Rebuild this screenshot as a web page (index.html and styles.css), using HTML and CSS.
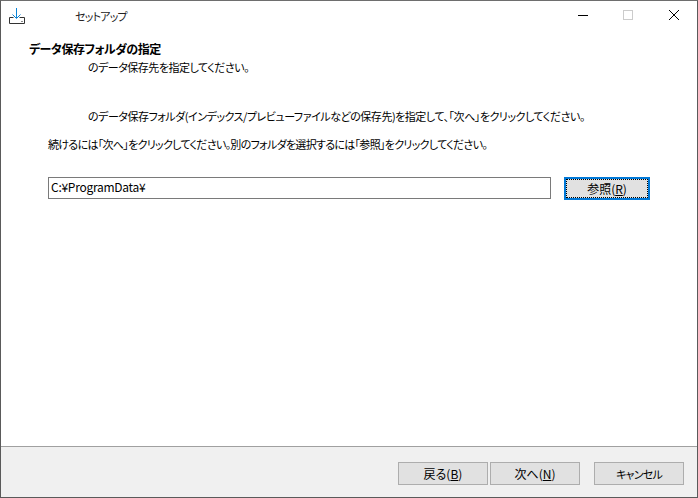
FILE: index.html
```html
<!DOCTYPE html>
<html lang="ja">
<head>
<meta charset="utf-8">
<title>セットアップ</title>
<link rel="stylesheet" href="styles.css">
</head>
<body>
<div class="window">
  <header class="titlebar">
    <svg class="app-icon" width="16" height="16" viewBox="0 0 16 16" fill="none">
      <path d="M7.5 0V10" stroke="#0a84d8"/>
      <path d="M3.5 6.5L7.5 10.5L11.5 6.5" stroke="#0a84d8"/>
      <path d="M4.5 9.5H.5V15.5H15.5V9.5H10.5" stroke="#333"/>
      <path d="M12 13.5H14" stroke="#888"/>
    </svg>
    <span class="title">セットアップ</span>
    <div class="controls">
      <svg class="ctl" width="10" height="10" viewBox="0 0 10 10"><path d="M0 5.5H10" stroke="#000"/></svg>
      <svg class="ctl" width="10" height="10" viewBox="0 0 10 10"><rect x=".5" y=".5" width="9" height="9" fill="none" stroke="#ccc"/></svg>
      <svg class="ctl" width="10" height="10" viewBox="0 0 10 10"><path d="M0 0L10 10M10 0L0 10" stroke="#000"/></svg>
    </div>
  </header>
  <main class="content">
    <h1 class="heading">データ保存フォルダの指定</h1>
    <p class="sub">のデータ保存先を指定してください。</p>
    <p class="desc">のデータ保存フォルダ(インデックス/プレビューファイルなどの保存先)を指定して、「次へ」をクリックしてください。</p>
    <p class="note">続けるには「次へ」をクリックしてください。別のフォルダを選択するには「参照」をクリックしてください。</p>
    <div class="path-row">
      <div class="path-input">C:¥ProgramData¥</div>
      <button class="btn browse"><span class="focus">参照(<u>R</u>)</span></button>
    </div>
  </main>
  <footer class="footer">
    <button class="btn nav">戻る(<u>B</u>)</button>
    <button class="btn nav">次へ(<u>N</u>)</button>
    <button class="btn nav cancel">キャンセル</button>
  </footer>
</div>
</body>
</html>
```
FILE: styles.css
```css
* { box-sizing: border-box; }
html, body { margin: 0; padding: 0; }
body {
  width: 698px;
  height: 498px;
  overflow: hidden;
  background: #fff;
  font-family: "Noto Sans CJK JP", "Noto Sans", sans-serif;
  font-size: 12px;
  color: #000;
  font-feature-settings: "palt";
}
.window {
  width: 698px;
  height: 498px;
  display: flex;
  flex-direction: column;
  border: 1px solid #5a5a5a;
  border-top-color: #6e6e6e;
}
.titlebar {
  height: 30px;
  display: flex;
  align-items: center;
  flex: none;
}
.app-icon { margin-left: 8px; margin-top: -1px; }
.title { margin-left: 50px; color: #222; font-size: 11px; letter-spacing: -.8px; }
.controls { margin-left: auto; margin-top: -2px; display: flex; align-items: center; margin-right: 18px; gap: 35px; }
.ctl { display: block; }
.ctl:last-child { margin-left: 1px; }
.content { flex: 1; min-height: 0; display: flex; flex-direction: column; padding-left: 28px; }
.heading { margin: 9px 0 0; font-size: 12px; line-height: 18px; font-weight: 700; letter-spacing: -.5px; }
.sub, .desc, .note { margin: 0; line-height: 18px; white-space: nowrap; font-size: 11px; }
.sub { margin: 0 0 0 59px; letter-spacing: -.5px; }
.desc { margin: 31px 0 0 59px; letter-spacing: -.47px; }
.note { margin: 10px 0 0 19px; letter-spacing: -.7px; }
.path-row { display: flex; align-items: flex-start; margin: 24px 0 0 19px; }
.path-input {
  width: 503px;
  height: 22px;
  border: 1px solid #7a7a7a;
  padding-left: 2px;
  line-height: 18px;
  font-size: 12px;
  letter-spacing: -.27px;
}
.btn {
  font-family: inherit;
  font-feature-settings: inherit;
  font-size: 12px;
  color: #000;
  background: #e1e1e1;
  border: 1px solid #adadad;
  padding: 0;
  width: 90px;
  height: 23px;
}
.browse { width: 86px; height: 23px; margin-left: 13px; border: 2px solid #0078d7; padding: 0; display: flex; }
.focus { flex: 1; border: 1px dotted #000; display: flex; align-items: center; justify-content: center; }
.footer {
  flex: none;
  height: 51px;
  border-top: 1px solid #a0a0a0;
  background: #f0f0f0;
  display: flex;
  align-items: flex-start;
  padding: 15px 0 0 397px;
  gap: 2px;
}
.cancel { margin-left: 12px; font-size: 11px; letter-spacing: -.8px; }
```
